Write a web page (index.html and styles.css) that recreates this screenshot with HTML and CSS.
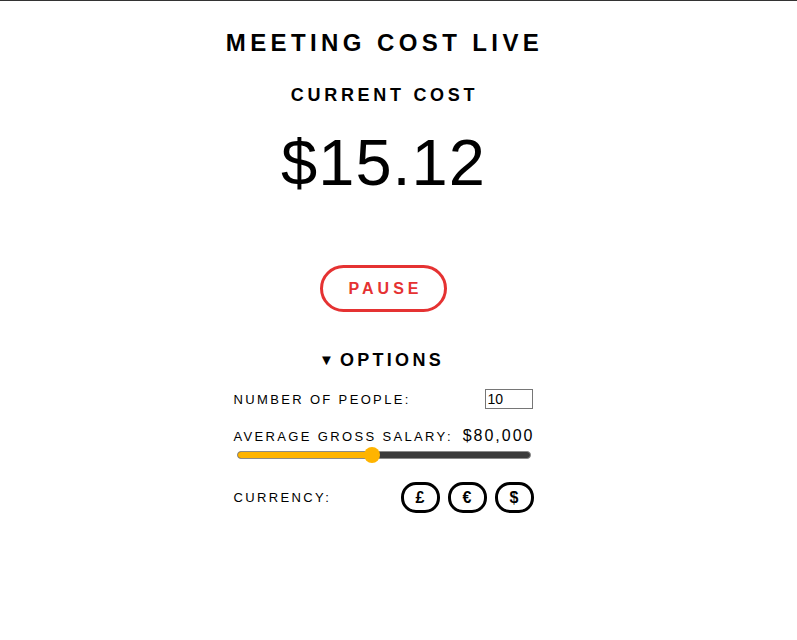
FILE: index.html
```html
<!DOCTYPE html>
<html>
<head>
<meta charset="utf-8">
<title>Meeting Cost Live</title>
<link rel="stylesheet" href="styles.css">
</head>
<body>
<div class="topline"></div>
<main class="app">
  <h1 class="title">MEETING COST LIVE</h1>
  <h2 class="subtitle">CURRENT COST</h2>
  <div class="cost">$15.12</div>
  <button class="pause">PAUSE</button>
  <details class="options" open>
    <summary class="options-summary">OPTIONS</summary>
    <div class="row people-row">
      <label class="label">NUMBER OF PEOPLE:</label>
      <input class="people" type="text" value="10">
    </div>
    <div class="row salary-row">
      <label class="label">AVERAGE GROSS SALARY:</label>
      <span class="salary-value">$80,000</span>
    </div>
    <div class="slider">
      <div class="slider-fill" style="width: 46%"></div>
      <div class="slider-thumb" style="left: 46%"></div>
    </div>
    <div class="row currency-row">
      <label class="label">CURRENCY:</label>
      <div class="currencies">
        <button class="cur">£</button>
        <button class="cur">€</button>
        <button class="cur">$</button>
      </div>
    </div>
  </details>
</main>
</body>
</html>
```
FILE: styles.css
```css
html, body {
  margin: 0;
  padding: 0;
  background: #fff;
}
body {
  font-family: "Liberation Sans", Arial, sans-serif;
  color: #000;
}
.topline {
  height: 1px;
  background: #333;
}
.app {
  width: 300px;
  margin: 0 auto;
  position: relative;
  left: -15px;
  display: flex;
  flex-direction: column;
  align-items: center;
}
.title {
  margin: 30px 0 0;
  font-size: 24px;
  font-weight: bold;
  letter-spacing: 4.4px;
  line-height: 24px;
  white-space: nowrap;
  padding-left: 2px;
}
.subtitle {
  margin: 31px 0 0;
  font-size: 18px;
  font-weight: bold;
  letter-spacing: 3.7px;
  line-height: 18px;
  padding-left: 2px;
}
.cost {
  margin-top: 26px;
  font-size: 65px;
  line-height: 65px;
  letter-spacing: 1px;
}
.pause {
  margin-top: 70px;
  width: 127px;
  height: 47px;
  border: 3px solid #e53232;
  border-radius: 24px;
  background: #fff;
  color: #e53232;
  font-family: "Liberation Sans", Arial, sans-serif;
  font-weight: bold;
  font-size: 16px;
  letter-spacing: 4px;
  padding: 0 0 0 4px;
}
.options {
  width: 300px;
  margin-top: 37px;
}
.options-summary {
  list-style: none;
  text-align: center;
  font-size: 18px;
  font-weight: bold;
  letter-spacing: 3.3px;
  line-height: 22px;
  cursor: pointer;
  padding-right: 4px;
}
.options-summary::-webkit-details-marker { display: none; }
.options-summary::before {
  content: "▼";
  font-size: 15px;
  letter-spacing: 6px;
  position: relative;
  top: -1px;
}
.row {
  display: flex;
  justify-content: space-between;
  align-items: center;
}
.label {
  font-size: 13px;
  letter-spacing: 2.35px;
}
.people-row {
  margin-top: 17px;
}
.people {
  width: 42px;
  height: 16px;
  border: 1px solid #767676;
  padding: 1px 2px;
  font-family: "Liberation Sans", Arial, sans-serif;
  font-size: 14px;
  margin: 0 1px 0 0;
}
.salary-row {
  margin-top: 18px;
}
.salary-value {
  font-size: 16px;
  letter-spacing: 2px;
  margin-right: -1px;
}
.slider {
  position: relative;
  margin: 6px 3px 0;
  height: 6px;
  background: #3b3b3b;
  border: 1px solid #8a8a8a;
  border-radius: 4px;
}
.slider-fill {
  position: absolute;
  left: 0;
  top: 0;
  bottom: 0;
  background: #ffb400;
  border-radius: 4px 0 0 4px;
}
.slider-thumb {
  position: absolute;
  top: 50%;
  width: 16px;
  height: 16px;
  margin: -8px 0 0 -8px;
  background: #ffb400;
  border-radius: 50%;
}
.currency-row {
  margin-top: 23px;
}
.currencies {
  display: flex;
  gap: 8px;
  margin-right: 0;
}
.cur {
  width: 39px;
  height: 31px;
  border: 3px solid #000;
  border-radius: 15px;
  background: #fff;
  font-family: "Liberation Sans", Arial, sans-serif;
  font-weight: bold;
  font-size: 16px;
  color: #000;
  padding: 0;
}
```
